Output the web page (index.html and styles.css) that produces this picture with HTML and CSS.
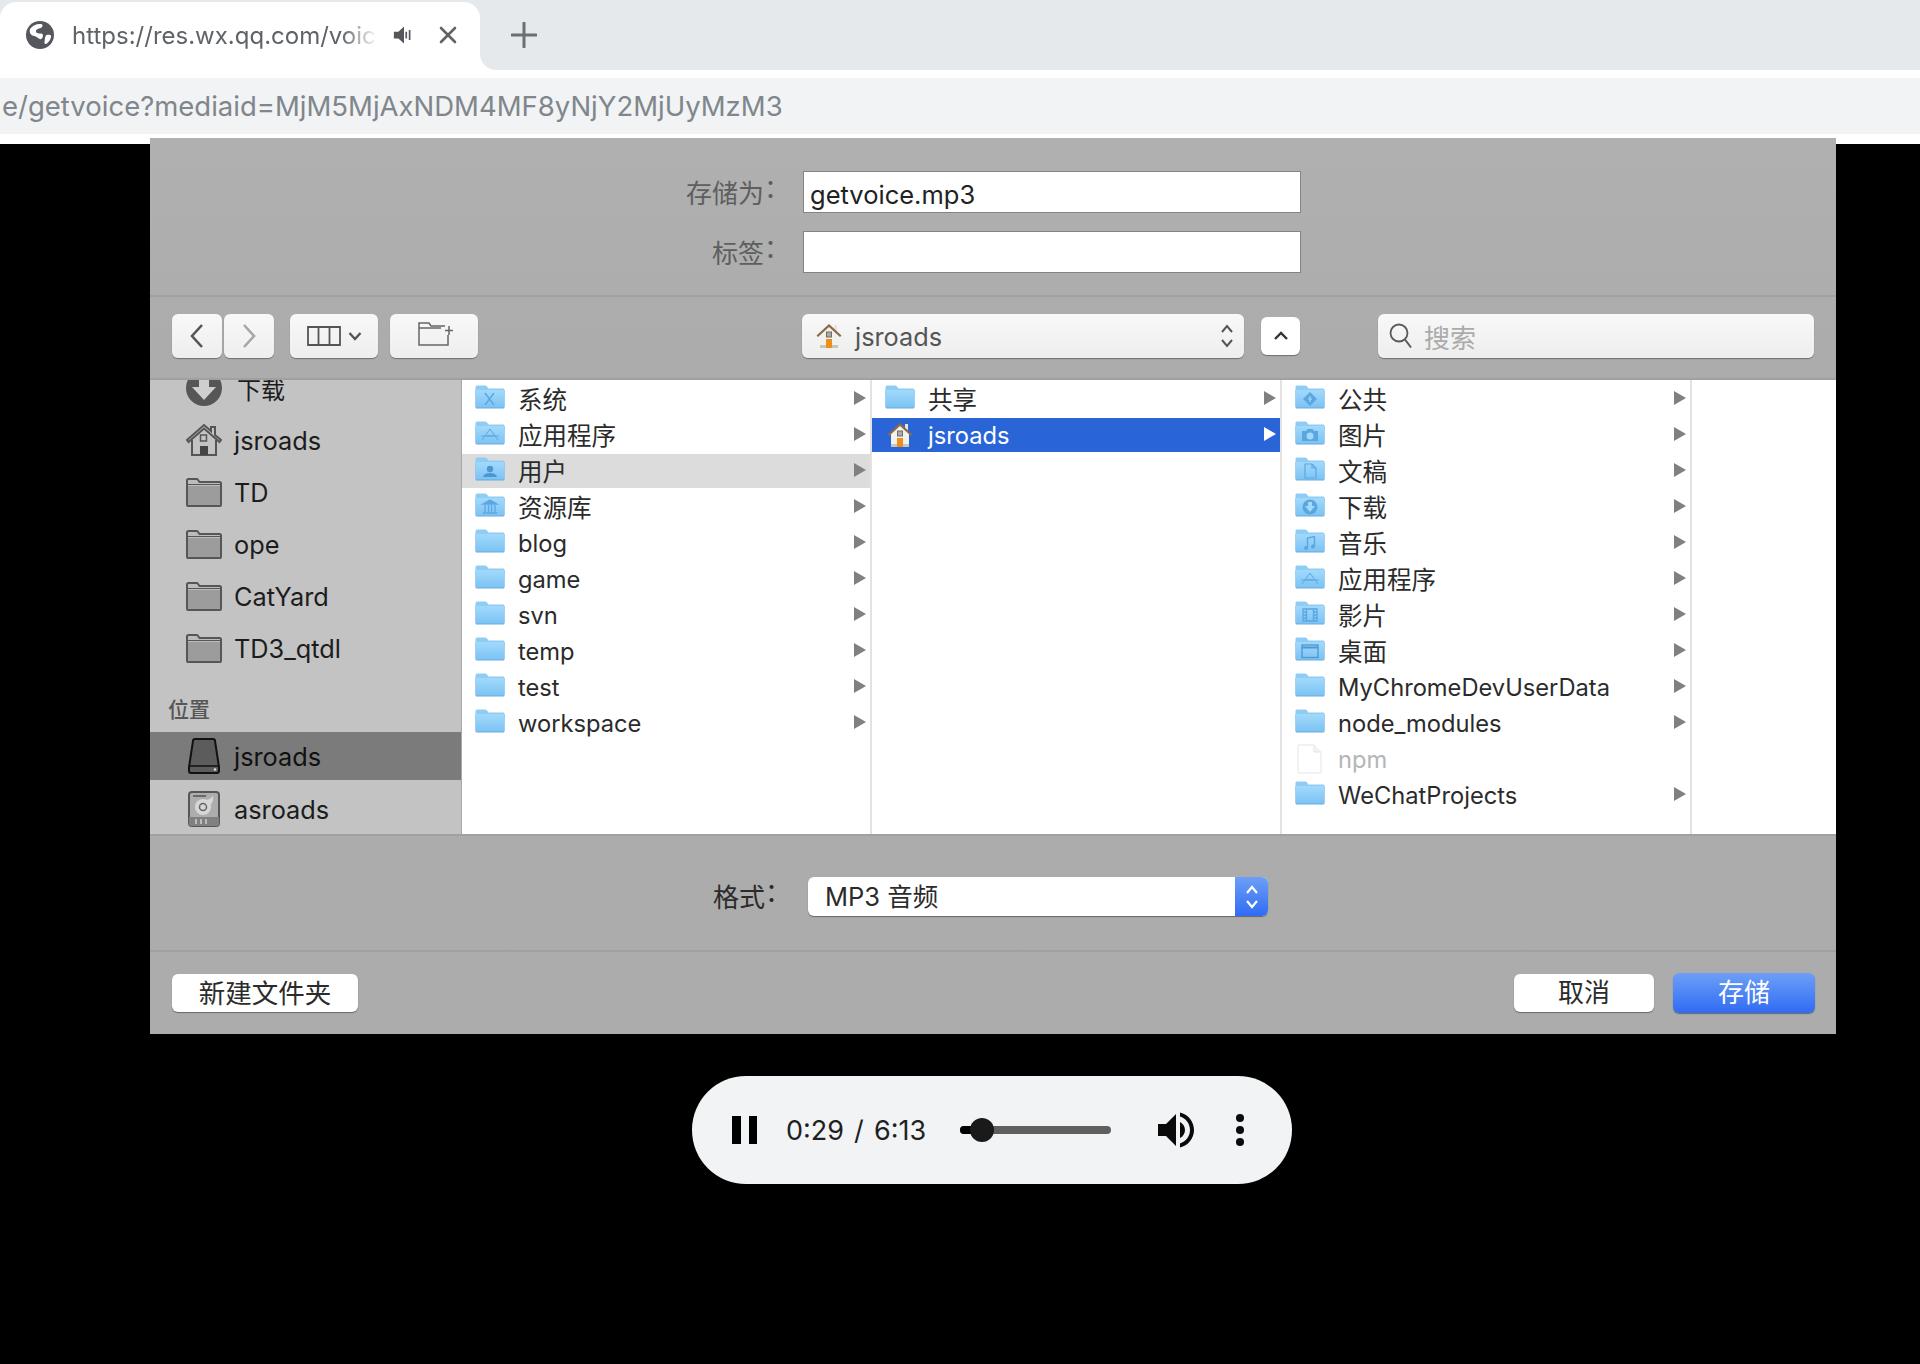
FILE: index.html
```html
<!DOCTYPE html>
<html lang="zh-CN">
<head>
<meta charset="UTF-8">
<meta name="viewport" content="width=device-width, initial-scale=1.0">
<title>getvoice</title>
<link rel="stylesheet" href="styles.css">
</head>
<body>
<svg class="defs" aria-hidden="true">
  <defs>
    <linearGradient id="blueFront" x1="0" y1="0" x2="0" y2="1">
      <stop offset="0" stop-color="#a3dafc"/>
      <stop offset="1" stop-color="#7cc3f4"/>
    </linearGradient>
    <symbol id="folder" viewBox="0 0 30 24">
      <path d="M2 0.5h8q1.2 0 2 1l1.6 2H28a1.5 1.5 0 0 1 1.5 1.5V10H.5V2A1.5 1.5 0 0 1 2 .5z" fill="#8fcdf5"/>
      <rect x=".5" y="4.5" width="29" height="19" rx="1.5" fill="#66abdc"/>
      <rect x=".5" y="4.5" width="29" height="18" rx="1.5" fill="url(#blueFront)"/>
    </symbol>
    <symbol id="grayFolder" viewBox="0 0 36 29">
      <path d="M1 27V2.5A1.5 1.5 0 0 1 2.5 1h8q1 0 1.6 1l1.4 2H33.5A1.5 1.5 0 0 1 35 5.500V27a1 1 0 0 1-1 1H2a1 1 0 0 1-1-1z" fill="#bcbcbc" stroke="#565656" stroke-width="2"/>
      <path d="M2 8H34V26a1 1 0 0 1-1 1H3a1 1 0 0 1-1-1z" fill="#9c9c9c"/>
      <path d="M1 6.500H35" stroke="#565656" stroke-width="1"/>
    </symbol>
    <symbol id="house" viewBox="0 0 26 26">
      <rect x="18" y="2" width="3" height="8" fill="#e8e4dc"/>
      <path d="M4 11l9-8 9 8V25H4z" fill="#f3f1ec"/>
      <path d="M4 22h18v3H4z" fill="#c9c5bd"/>
      <path d="M.5 12.500L13 1l12.500 11.500-1.500 1.500L13 4 2 14z" fill="#8a6a48"/>
      <rect x="10.500" y="9" width="5" height="5" fill="#a9a9a9" stroke="#6d6d6d"/>
      <rect x="10" y="16" width="6" height="9" fill="#ec8f1f"/>
    </symbol>
  </defs>
</svg>

<div class="tabbar">
  <div class="tab-wrap">
    <div class="tab">
      <svg class="globe" viewBox="0 0 28 28">
        <circle cx="14" cy="14" r="14" fill="#54575c"/>
        <path d="M4 8C7 4 11 2.500 15 3c2 .3 2 2.500.5 3.500-2 1.300-5 1-5.500 3.500-.4 2 2.500 2.500 4.500 2.500 2.500 0 3 2 2 4-1 2.200-3 2-4.500.5C10 15 6.500 15 5 13.500 3.800 12 3.300 9.500 4 8z" fill="#fff"/>
        <path d="M20.500 14c2-.6 4-.3 4.500.5.3 3-1.800 6.500-4.500 8.200-1.200.6-2.400-.2-2-1.700.4-2 .4-6.400 2-7z" fill="#fff"/>
      </svg>
      <span class="tab-title">https://res.wx.qq.com/voice</span>
      <svg class="tab-sound" viewBox="0 0 18 16">
        <path d="M0 5h4l5-4.500v15L4 11H0z" fill="#54575c"/>
        <path d="M11 5v6M14 3.500v9" stroke="#54575c" stroke-width="1.500"/>
      </svg>
      <svg class="tab-close" viewBox="0 0 18 18">
        <path d="M2 2l14 14M16 2L2 16" stroke="#5f6368" stroke-width="2.600" stroke-linecap="round"/>
      </svg>
    </div>
  </div>
  <div class="tabbar-rest">
    <svg class="new-tab" viewBox="0 0 26 26">
      <path d="M13 1v24M1 13h24" stroke="#6b6f74" stroke-width="3" stroke-linecap="round"/>
    </svg>
  </div>
</div>

<div class="addressbar">e/getvoice?mediaid=MjM5MjAxNDM4MF8yNjY2MjUyMzM3</div>

<div class="viewport">
  <div class="dialog">
    <div class="save-form">
      <label class="form-label">存储为<span class="colon">：</span></label>
      <div class="field">getvoice.mp3</div>
      <label class="form-label">标签<span class="colon">：</span></label>
      <div class="field"></div>
    </div>

    <div class="toolbar">
      <div class="tool tool-nav">
        <svg width="16" height="26" viewBox="0 0 16 26"><path d="M13 2L3 13l10 11" fill="none" stroke="#555" stroke-width="2.600"/></svg>
      </div>
      <div class="tool tool-nav tool-next">
        <svg width="16" height="26" viewBox="0 0 16 26"><path d="M3 2l10 11L3 24" fill="none" stroke="#a6a6a6" stroke-width="2.600"/></svg>
      </div>
      <div class="tool tool-view">
        <svg width="34" height="20" viewBox="0 0 34 20"><path d="M1 1h32v18H1zM11.500 1v18M22.500 1v18" fill="none" stroke="#555" stroke-width="1.800"/></svg>
        <svg width="14" height="10" viewBox="0 0 14 10"><path d="M1.500 2L7 8l5.500-6" fill="none" stroke="#555" stroke-width="2.400"/></svg>
      </div>
      <div class="tool tool-new">
        <svg width="36" height="24" viewBox="0 0 36 24"><path d="M1 3V1h10l2 3h14M1 3v20h29V13M1 6h22M31 4v9M27 8.500h8" fill="none" stroke="#666" stroke-width="1.500"/></svg>
      </div>
      <div class="tool path-popup">
        <svg class="popup-house" viewBox="0 0 26 26"><use href="#house"/></svg>
        <span class="popup-name">jsroads</span>
        <svg class="popup-arrows" width="14" height="26" viewBox="0 0 14 26"><path d="M2 9l5-6 5 6M2 17l5 6 5-6" fill="none" stroke="#555" stroke-width="2"/></svg>
      </div>
      <div class="tool tool-up">
        <svg width="16" height="10" viewBox="0 0 16 10"><path d="M2 8l6-6 6 6" fill="none" stroke="#333" stroke-width="2.400"/></svg>
      </div>
      <div class="tool search">
        <svg width="24" height="26" viewBox="0 0 24 26"><circle cx="10" cy="10" r="8.500" fill="none" stroke="#5a5a5a" stroke-width="1.800"/><path d="M16 16.500l6 8" stroke="#5a5a5a" stroke-width="2"/></svg>
        <span class="search-hint">搜索</span>
      </div>
    </div>

    <div class="browser">
      <div class="sidebar">
        <div class="side-list">
          <div class="side-row">
            <svg class="side-icon" viewBox="0 0 36 36"><circle cx="18" cy="18" r="18" fill="#565656"/><path d="M13 5h10v12h7L18 30 6 17h7z" fill="#cfcfcf"/></svg>
            <span class="side-cjk">下载</span>
          </div>
          <div class="side-row">
            <svg class="side-icon" viewBox="0 0 36 34"><path d="M1 17L18 2l7 6V4h4v8l6 5-1.500 2L18 5.500 2.500 19zM6 17V32h24V17" fill="#c3c3c3" stroke="#555" stroke-width="2"/><rect x="14.500" y="12" width="6" height="6" fill="none" stroke="#555" stroke-width="1.500"/><rect x="14" y="23" width="8" height="9" fill="#444"/></svg>
            <span>jsroads</span>
          </div>
          <div class="side-row"><svg class="side-icon side-folder" viewBox="0 0 36 29"><use href="#grayFolder"/></svg><span>TD</span></div>
          <div class="side-row"><svg class="side-icon side-folder" viewBox="0 0 36 29"><use href="#grayFolder"/></svg><span>ope</span></div>
          <div class="side-row"><svg class="side-icon side-folder" viewBox="0 0 36 29"><use href="#grayFolder"/></svg><span>CatYard</span></div>
          <div class="side-row"><svg class="side-icon side-folder" viewBox="0 0 36 29"><use href="#grayFolder"/></svg><span>TD3_qtdl</span></div>
          <div class="side-head">位置</div>
          <div class="side-row side-selected">
            <svg class="side-icon side-drive" viewBox="0 0 32 36"><path d="M5 3a2 2 0 0 1 2-2h18a2 2 0 0 1 2 2l4 26v4a2 2 0 0 1-2 2H3a2 2 0 0 1-2-2v-4z" fill="#5c5c5c" stroke="#111" stroke-width="2"/><path d="M1.500 28h29" stroke="#111" stroke-width="1.500"/><circle cx="27" cy="31.500" r="1.300" fill="#ddd"/></svg>
            <span>jsroads</span>
          </div>
          <div class="side-row side-last">
            <svg class="side-icon side-drive" viewBox="0 0 32 36"><rect x="1" y="1" width="30" height="34" rx="3" fill="#adadad" stroke="#565656" stroke-width="2"/><path d="M1 26h30v7a2 2 0 0 1-2 2H3a2 2 0 0 1-2-2z" fill="#808080"/><path d="M5 5h13" stroke="#555" stroke-width="1.500"/><circle cx="15" cy="16" r="8" fill="#d7d7d7"/><circle cx="15" cy="16" r="3.500" fill="none" stroke="#666" stroke-width="1.500"/><path d="M18 9q6-1 7-5 1 8-4 11z" fill="#d7d7d7"/><path d="M8 28v5M13 28v5M18 28v5" stroke="#d0d0d0" stroke-width="1.500"/></svg>
            <span>asroads</span>
          </div>
        </div>
      </div>

      <div class="column">
        <div class="row">
          <svg class="ico" viewBox="0 0 30 24"><use href="#folder"/><path d="M10 8l9 12M19 8l-9 12" stroke="#5aa7e0" stroke-width="1.400"/></svg>
          <span class="row-name row-cjk">系统</span><i class="arrow"></i>
        </div>
        <div class="row">
          <svg class="ico" viewBox="0 0 30 24"><use href="#folder"/><path d="M7 19L15 8l8 11M11 15h8M6 15h18" fill="none" stroke="#5aa7e0" stroke-width="1"/></svg>
          <span class="row-name row-cjk">应用程序</span><i class="arrow"></i>
        </div>
        <div class="row row-hover">
          <svg class="ico" viewBox="0 0 30 24"><use href="#folder"/><circle cx="15" cy="12" r="3.200" fill="#4d96cf"/><path d="M8 20q1-4 7-4t7 4z" fill="#4d96cf"/></svg>
          <span class="row-name row-cjk">用户</span><i class="arrow"></i>
        </div>
        <div class="row">
          <svg class="ico" viewBox="0 0 30 24"><use href="#folder"/><path d="M8 11l7-4 7 4zM8 20h14M10 12v7M13.500 12v7M16.500 12v7M20 12v7" fill="#5aa7e0" stroke="#5aa7e0" stroke-width="1.300"/></svg>
          <span class="row-name row-cjk">资源库</span><i class="arrow"></i>
        </div>
        <div class="row"><svg class="ico" viewBox="0 0 30 24"><use href="#folder"/></svg><span class="row-name">blog</span><i class="arrow"></i></div>
        <div class="row"><svg class="ico" viewBox="0 0 30 24"><use href="#folder"/></svg><span class="row-name">game</span><i class="arrow"></i></div>
        <div class="row"><svg class="ico" viewBox="0 0 30 24"><use href="#folder"/></svg><span class="row-name">svn</span><i class="arrow"></i></div>
        <div class="row"><svg class="ico" viewBox="0 0 30 24"><use href="#folder"/></svg><span class="row-name">temp</span><i class="arrow"></i></div>
        <div class="row"><svg class="ico" viewBox="0 0 30 24"><use href="#folder"/></svg><span class="row-name">test</span><i class="arrow"></i></div>
        <div class="row"><svg class="ico" viewBox="0 0 30 24"><use href="#folder"/></svg><span class="row-name">workspace</span><i class="arrow"></i></div>
      </div>

      <div class="column">
        <div class="row"><svg class="ico" viewBox="0 0 30 24"><use href="#folder"/></svg><span class="row-name row-cjk">共享</span><i class="arrow"></i></div>
        <div class="row row-active">
          <svg class="ico ico-house" viewBox="0 0 26 26"><use href="#house"/></svg>
          <span class="row-name">jsroads</span><i class="arrow"></i>
        </div>
      </div>

      <div class="column">
        <div class="row">
          <svg class="ico" viewBox="0 0 30 24"><use href="#folder"/><path d="M15 7l7 7-7 7-7-7z" fill="#5aa7e0"/><path d="M13 14h4M15 11v6" stroke="#a3dafc" stroke-width="1.200"/></svg>
          <span class="row-name row-cjk">公共</span><i class="arrow"></i>
        </div>
        <div class="row">
          <svg class="ico" viewBox="0 0 30 24"><use href="#folder"/><path d="M7 10h4l1.500-2h5L19 10h4v10H7z" fill="#5aa7e0"/><circle cx="15" cy="15" r="3.500" fill="#a3dafc"/></svg>
          <span class="row-name row-cjk">图片</span><i class="arrow"></i>
        </div>
        <div class="row">
          <svg class="ico" viewBox="0 0 30 24"><use href="#folder"/><path d="M10 7h7l4 4v10H10zM17 7v4h4" fill="none" stroke="#5aa7e0" stroke-width="1.200"/></svg>
          <span class="row-name row-cjk">文稿</span><i class="arrow"></i>
        </div>
        <div class="row">
          <svg class="ico" viewBox="0 0 30 24"><use href="#folder"/><circle cx="15" cy="14" r="7.500" fill="#5aa7e0"/><path d="M13 9h4v4h3l-5 6-5-6h3z" fill="#a3dafc"/></svg>
          <span class="row-name row-cjk">下载</span><i class="arrow"></i>
        </div>
        <div class="row">
          <svg class="ico" viewBox="0 0 30 24"><use href="#folder"/><path d="M12.500 19V9l7-1.500V17" fill="none" stroke="#5aa7e0" stroke-width="1.400"/><circle cx="11" cy="19" r="2" fill="#5aa7e0"/><circle cx="18" cy="17.500" r="2" fill="#5aa7e0"/></svg>
          <span class="row-name row-cjk">音乐</span><i class="arrow"></i>
        </div>
        <div class="row">
          <svg class="ico" viewBox="0 0 30 24"><use href="#folder"/><path d="M7 19L15 8l8 11M11 15h8M6 15h18" fill="none" stroke="#5aa7e0" stroke-width="1"/></svg>
          <span class="row-name row-cjk">应用程序</span><i class="arrow"></i>
        </div>
        <div class="row">
          <svg class="ico" viewBox="0 0 30 24"><use href="#folder"/><path d="M8 8h14v12H8zM11.500 8v12M18.500 8v12M8 11h3.500M8 14h3.500M8 17h3.500M18.500 11H22M18.500 14H22M18.500 17H22" fill="none" stroke="#5aa7e0" stroke-width="1.300"/></svg>
          <span class="row-name row-cjk">影片</span><i class="arrow"></i>
        </div>
        <div class="row">
          <svg class="ico" viewBox="0 0 30 24"><use href="#folder"/><rect x="7" y="8" width="16" height="12.500" fill="none" stroke="#4d96cf" stroke-width="1.300"/><path d="M7 10.500h16" stroke="#4d96cf" stroke-width="2"/></svg>
          <span class="row-name row-cjk">桌面</span><i class="arrow"></i>
        </div>
        <div class="row"><svg class="ico" viewBox="0 0 30 24"><use href="#folder"/></svg><span class="row-name">MyChromeDevUserData</span><i class="arrow"></i></div>
        <div class="row"><svg class="ico" viewBox="0 0 30 24"><use href="#folder"/></svg><span class="row-name">node_modules</span><i class="arrow"></i></div>
        <div class="row row-disabled">
          <svg class="ico" viewBox="0 0 30 30"><path d="M4 1h15l7 7v20a1 1 0 0 1-1 1H4a1 1 0 0 1-1-1V2a1 1 0 0 1 1-1z" fill="#fff" stroke="#e4e4e4"/><path d="M19 1v7h7" fill="#f4f4f4" stroke="#e4e4e4"/></svg>
          <span class="row-name">npm</span>
        </div>
        <div class="row"><svg class="ico" viewBox="0 0 30 24"><use href="#folder"/></svg><span class="row-name">WeChatProjects</span><i class="arrow"></i></div>
      </div>

      <div class="column column-last"></div>
    </div>

    <div class="format">
      <label class="form-label format-label">格式<span class="colon">：</span></label>
      <div class="select">
        <span class="select-value">MP3 音频</span>
        <div class="stepper">
          <svg width="14" height="28" viewBox="0 0 14 28"><path d="M2 10l5-6 5 6M2 18l5 6 5-6" fill="none" stroke="#fff" stroke-width="2.200"/></svg>
        </div>
      </div>
    </div>

    <div class="footer">
      <button class="btn btn-new">新建文件夹</button>
      <button class="btn btn-cancel">取消</button>
      <button class="btn btn-save">存储</button>
    </div>
  </div>

  <div class="player">
    <div class="pause"><i></i><i></i></div>
    <div class="time">0:29 / 6:13</div>
    <div class="slider">
      <div class="slider-fill"></div>
      <div class="slider-thumb"></div>
    </div>
    <svg class="volume" viewBox="3 3 18 18">
      <path d="M3 9v6h4l5 5V4L7 9H3zm13.500 3c0-1.770-1.020-3.290-2.500-4.030v8.050c1.480-.73 2.500-2.250 2.500-4.020zM14 3.230v2.060c2.890.86 5 3.540 5 6.710s-2.110 5.850-5 6.710v2.060c4.010-.91 7-4.490 7-8.770s-2.990-7.860-7-8.770z" fill="#0a0a0a"/>
    </svg>
    <div class="dots"><i></i><i></i><i></i></div>
  </div>
</div>
</body>
</html>
```

FILE: styles.css
```css
* {
  box-sizing: border-box;
}
html, body {
  margin: 0;
  padding: 0;
  height: 100%;
}
body {
  font-family: Inter, "Noto Sans CJK SC", sans-serif;
  background-color: #fff;
  display: flex;
  flex-direction: column;
  color: #2b2b2b;
}
.defs {
  display: block;
  width: 0;
  height: 0;
}

/* browser chrome */
.tabbar {
  display: flex;
  height: 70px;
  background-color: #fff;
}
.tab-wrap {
  width: 480px;
  padding-top: 2px;
  background-color: #e6e9ec;
}
.tab {
  display: flex;
  align-items: center;
  height: 68px;
  padding-bottom: 2px;
  background-color: #fff;
  border-radius: 16px 16px 0 0;
}
.globe {
  width: 28px;
  height: 28px;
  margin-left: 26px;
}
.tab-title {
  width: 306px;
  margin-left: 18px;
  overflow: hidden;
  white-space: nowrap;
  font-size: 24px;
  color: #5f6368;
  -webkit-mask-image: linear-gradient(to right, #000 88%, transparent 100%);
  mask-image: linear-gradient(to right, #000 88%, transparent 100%);
}
.tab-sound {
  width: 22px;
  height: 18px;
  margin-left: 15px;
}
.tab-close {
  width: 18px;
  height: 18px;
  margin-left: 24px;
}
.tabbar-rest {
  flex: 1;
  display: flex;
  align-items: center;
  padding-left: 31px;
  background-color: #e6e9ec;
  border-bottom-left-radius: 16px;
}
.new-tab {
  width: 26px;
  height: 26px;
}
.addressbar {
  height: 56px;
  margin-top: 8px;
  padding-left: 2px;
  line-height: 57px;
  white-space: nowrap;
  font-size: 27.500px;
  color: #80868b;
  background-color: #f1f3f4;
}

.viewport {
  flex: 1;
  border-top: 10px solid #fff;
  background-color: #000;
}

/* save dialog */
.dialog {
  width: 1686px;
  height: 896px;
  margin: -6px 0 0 150px;
  display: flex;
  flex-direction: column;
  background: linear-gradient(#b0b0b0, #ababab 30%, #acacac);
}
.save-form {
  display: grid;
  grid-template-columns: 640px 498px;
  grid-auto-rows: 42px;
  column-gap: 13px;
  row-gap: 18px;
  height: 159px;
  padding-top: 33px;
  border-bottom: 2px solid #a0a0a0;
}
.form-label {
  display: flex;
  justify-content: flex-end;
  align-items: center;
  padding-bottom: 2px;
  font-size: 26px;
  color: #5e5e5e;
}
.colon {
  display: inline-block;
  transform: translateY(-5px);
}
.field {
  padding-left: 6px;
  line-height: 46px;
  font-size: 25.500px;
  color: #222;
  background-color: #fff;
  border: 1px solid #858585;
}
.toolbar {
  display: flex;
  align-items: center;
  height: 83px;
  padding: 0 22px 3px;
  border-bottom: 2px solid #a0a0a0;
}
.tool {
  display: flex;
  align-items: center;
  justify-content: center;
  height: 44px;
  border-radius: 6px;
  background: linear-gradient(#f8f8f8, #eeeeee);
  box-shadow: 0 1px 1px rgba(0, 0, 0, 0.35);
}
.tool-nav {
  width: 50px;
}
.tool-next {
  margin-left: 2px;
}
.tool-view {
  width: 88px;
  margin-left: 16px;
  gap: 7px;
}
.tool-new {
  width: 88px;
  margin-left: 12px;
  padding: 0 0 4px 4px;
}
.path-popup {
  width: 442px;
  margin-left: 324px;
  justify-content: flex-start;
  padding: 0 10px 0 14px;
}
.popup-house {
  width: 26px;
  height: 26px;
}
.popup-name {
  margin-left: 13px;
  font-size: 25.300px;
  color: #555;
}
.popup-arrows {
  margin-left: auto;
}
.tool-up {
  width: 39px;
  height: 38px;
  margin-left: 17px;
  background: #fff;
}
.search {
  width: 436px;
  margin-left: 78px;
  justify-content: flex-start;
  padding-left: 11px;
}
.search-hint {
  margin-left: 11px;
  font-size: 26px;
  color: #ababab;
}

/* file browser */
.browser {
  display: flex;
  height: 454px;
  background-color: #fff;
  overflow: hidden;
}
.sidebar {
  width: 312px;
  flex-shrink: 0;
  background-color: #c3c3c3;
  border-right: 1px solid #a8a8a8;
  overflow: hidden;
}
.side-list {
  margin-top: -18px;
}
.side-row {
  display: flex;
  align-items: center;
  height: 52px;
  padding-left: 36px;
  font-size: 25.300px;
  color: #1c1c1c;
}
.side-row > span {
  margin-left: 12px;
}
.side-icon {
  width: 36px;
  height: 36px;
  flex-shrink: 0;
}
.side-folder {
  height: 29px;
}
.side-row > .side-cjk {
  margin-left: 15px;
  font-size: 24px;
}
.side-drive {
  width: 32px;
  margin: 0 2px;
}
.side-head {
  height: 49px;
  padding: 22px 0 0 18px;
  line-height: 28px;
  font-size: 21px;
  font-weight: 500;
  color: #565656;
}
.side-selected {
  height: 48px;
  margin-top: 9px;
  background-color: #7b7b7b;
  color: #111;
}
.side-last {
  height: 58px;
}
.column {
  width: 410px;
  flex-shrink: 0;
  padding-top: 2px;
  border-right: 2px solid #e2e2e2;
}
.column-last {
  flex: 1;
  border-right: none;
}
.row {
  display: flex;
  align-items: center;
  height: 34px;
  margin-bottom: 2px;
  padding: 0 4px 0 13px;
  font-size: 23.700px;
  color: #2b2b2b;
}
.ico {
  width: 30px;
  height: 24px;
  margin-top: -4px;
  flex-shrink: 0;
  overflow: visible;
}
.row-name {
  margin-left: 13px;
}
.row-cjk {
  margin-top: -2px;
  font-size: 24.500px;
}
.arrow {
  width: 0;
  height: 0;
  margin: -2px 0 0 auto;
  border-style: solid;
  border-width: 7px 0 7px 12px;
  border-color: transparent transparent transparent #808080;
}
.row-hover {
  background-color: #dcdcdc;
}
.row-active {
  background-color: #2a65d8;
  color: #fff;
}
.row-active .arrow {
  border-left-color: #fff;
}
.row-active .ico-house {
  width: 26px;
  height: 26px;
  margin: 0 2px;
}
.row-disabled {
  color: #b5b5b5;
}
.row-disabled .ico {
  height: 30px;
  margin-top: 0;
}

/* bottom of the dialog */
.format {
  display: flex;
  align-items: flex-start;
  height: 118px;
  padding: 41px 0 0 563px;
  border-top: 2px solid #a0a0a0;
  border-bottom: 2px solid #a0a0a0;
}
.format-label {
  height: 39px;
  color: #2b2b2b;
}
.select {
  display: flex;
  width: 460px;
  height: 39px;
  margin-left: 17px;
  background-color: #fff;
  border-radius: 6px;
  box-shadow: 0 1px 1px rgba(0, 0, 0, 0.4);
  overflow: hidden;
}
.select-value {
  flex: 1;
  padding-left: 17px;
  line-height: 40px;
  font-size: 25.500px;
  color: #2b2b2b;
}
.stepper {
  display: flex;
  align-items: center;
  justify-content: center;
  width: 33px;
  background: linear-gradient(#6d9ff7, #2f6cf3);
}
.footer {
  flex: 1;
  display: flex;
  align-items: center;
  padding: 0 21px 1px 22px;
}
.btn {
  height: 38px;
  padding: 0;
  font-family: inherit;
  font-size: 26px;
  line-height: 36px;
  color: #2b2b2b;
  background-color: #fff;
  border: none;
  border-radius: 6px;
  box-shadow: 0 1px 1px rgba(0, 0, 0, 0.4);
}
.btn-new {
  width: 186px;
  font-size: 26.500px;
}
.btn-cancel {
  width: 140px;
  margin-left: auto;
}
.btn-save {
  width: 142px;
  height: 40px;
  margin-left: 19px;
  color: #fff;
  background: linear-gradient(#6d9ff7, #2f6cf3);
}

/* audio player */
.player {
  display: flex;
  align-items: center;
  width: 600px;
  height: 108px;
  margin: 42px 0 0 692px;
  padding-left: 40px;
  background-color: #f1f3f4;
  border-radius: 54px;
}
.pause {
  display: flex;
  gap: 8px;
}
.pause i {
  display: block;
  width: 8.500px;
  height: 28px;
  background-color: #000;
}
.time {
  width: 141px;
  margin-left: 29px;
  white-space: nowrap;
  font-size: 27px;
  word-spacing: 2.500px;
  color: #1f1f1f;
}
.slider {
  position: relative;
  width: 151px;
  height: 8px;
  margin-left: 33px;
  background-color: #5f5f5f;
  border-radius: 4px;
}
.slider-fill {
  width: 22px;
  height: 8px;
  background-color: #000;
  border-radius: 4px 0 0 4px;
}
.slider-thumb {
  position: absolute;
  left: 10px;
  top: -8px;
  width: 24px;
  height: 24px;
  background-color: #1a1a1a;
  border-radius: 50%;
}
.volume {
  width: 36px;
  height: 36px;
  margin-left: 47px;
}
.dots {
  display: flex;
  flex-direction: column;
  gap: 4px;
  margin-left: 42px;
}
.dots i {
  display: block;
  width: 8px;
  height: 8px;
  background-color: #0a0a0a;
  border-radius: 50%;
}
```
